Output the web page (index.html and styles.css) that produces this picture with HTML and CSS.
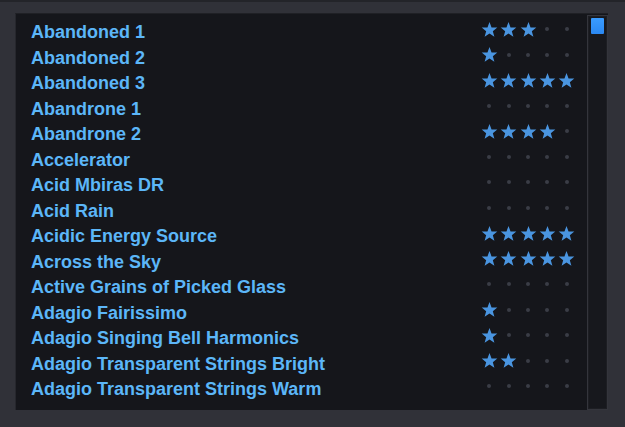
FILE: index.html
```html
<!DOCTYPE html>
<html lang="en">
<head>
    <meta charset="UTF-8">
    <title>Patch Browser</title>
    <link rel="stylesheet" href="styles.css">
</head>
<body>
    <div class="topline"></div>
    <div class="frame">
        <div class="panel">
            <ul class="list" id="list"></ul>
            <div class="scrollbar"><div class="thumb"></div></div>
        </div>
    </div>

    <svg width="0" height="0" style="position:absolute">
        <defs>
            <symbol id="star" viewBox="0 0 24 24">
                <polygon points="12,1.5 14.9,9 23,9.3 16.7,14.4 18.9,22.3 12,17.8 5.1,22.3 7.3,14.4 1,9.3 9.1,9"/>
            </symbol>
        </defs>
    </svg>

    <script>
        // patch name + rating (0-5)
        const patches = [
            ['Abandoned 1', 3],
            ['Abandoned 2', 1],
            ['Abandoned 3', 5],
            ['Abandrone 1', 0],
            ['Abandrone 2', 4],
            ['Accelerator', 0],
            ['Acid Mbiras DR', 0],
            ['Acid Rain', 0],
            ['Acidic Energy Source', 5],
            ['Across the Sky', 5],
            ['Active Grains of Picked Glass', 0],
            ['Adagio Fairissimo', 1],
            ['Adagio Singing Bell Harmonics', 1],
            ['Adagio Transparent Strings Bright', 2],
            ['Adagio Transparent Strings Warm', 0]
        ];

        const list = document.getElementById('list');
        patches.forEach(function (p) {
            const li = document.createElement('li');
            li.className = 'row';

            const name = document.createElement('span');
            name.className = 'name';
            name.textContent = p[0];
            li.appendChild(name);

            const rating = document.createElement('span');
            rating.className = 'rating';
            for (let i = 0; i < 5; i++) {
                const cell = document.createElement('span');
                cell.className = 'cell';
                if (i < p[1]) {
                    cell.innerHTML = '<svg class="star"><use href="#star"/></svg>';
                } else {
                    cell.innerHTML = '<span class="dot"></span>';
                }
                rating.appendChild(cell);
            }
            li.appendChild(rating);
            list.appendChild(li);
        });
    </script>
</body>
</html>
```

FILE: styles.css
```css
* {
    box-sizing: border-box;
}
html, body {
    margin: 0;
    height: 100%;
}
body {
    background-color: #303138;
    font-family: "Liberation Sans", Arial, sans-serif;
    overflow: hidden;
}
.topline {
    height: 2px;
    background-color: #232429;
}
.frame {
    padding: 11px 17px 16px 15px;
}
.panel {
    display: flex;
    height: 397px;
    background-color: #15161b;
    border-top: 1px solid #1f2025;
    border-left: 1px solid #26272d;
}
.list {
    flex: 1;
    list-style: none;
    margin: 0;
    padding: 5px 0 0 15px;
}
.row {
    display: flex;
    align-items: center;
    height: 25.5px;
}
.name {
    flex: 1;
    color: #5cb6f8;
    font-weight: bold;
    font-size: 18px;
    line-height: 25.5px;
    padding-top: 2px;
}
.rating {
    display: flex;
    margin-right: 10.5px;
    margin-bottom: 5px;
}
.cell {
    width: 19.4px;
    height: 17px;
    display: flex;
    align-items: center;
    justify-content: center;
}
.star {
    width: 17px;
    height: 17px;
    fill: #4a95e0;
}
.dot {
    width: 4px;
    height: 4px;
    border-radius: 50%;
    background-color: #3a3d46;
}
.scrollbar {
    width: 21px;
    margin: 1px 0 0 0;
    padding: 2px 3px;
    background-color: #17181d;
    border: 1px solid #34353c;
    box-shadow: inset 0 0 0 1px #1d1e23;
}
.thumb {
    height: 16px;
    background: linear-gradient(#3a9cff, #2b88f2);
    border-radius: 1px;
}
```
